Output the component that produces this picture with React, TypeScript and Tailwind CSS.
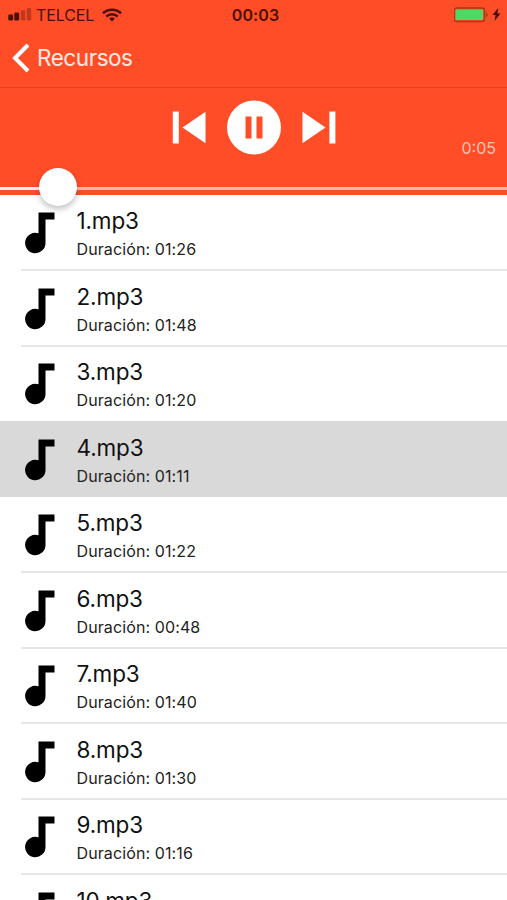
import React from "react";

const tracks = [
  { name: "1.mp3", duration: "01:26" },
  { name: "2.mp3", duration: "01:48" },
  { name: "3.mp3", duration: "01:20" },
  { name: "4.mp3", duration: "01:11" },
  { name: "5.mp3", duration: "01:22" },
  { name: "6.mp3", duration: "00:48" },
  { name: "7.mp3", duration: "01:40" },
  { name: "8.mp3", duration: "01:30" },
  { name: "9.mp3", duration: "01:16" },
  { name: "10.mp3" },
];

const playing = 3;

function StatusBar() {
  return (
    <div className="flex h-7 items-center justify-between pt-px pr-1.5 pl-2 text-[#4a1006]">
      <div className="flex w-[140px] items-center">
        <svg width="24" height="13" viewBox="0 0 24 13" fill="currentColor">
          <rect x="0.3" y="6.5" width="4.8" height="6" rx="1.2" />
          <rect x="6.3" y="4.5" width="4.8" height="8" rx="1.2" />
          <rect x="12.8" y="2.2" width="4.4" height="10.3" rx="1.2" opacity="0.35" />
          <rect x="18.8" y="0" width="4.4" height="12.5" rx="1.2" opacity="0.35" />
        </svg>
        <span className="ml-1 text-[16px] tracking-[-0.1px]">TELCEL</span>
        <svg className="ml-2" width="20" height="14" viewBox="0 0 20 14" fill="none" stroke="currentColor" strokeWidth="2.6">
          <path d="M1 5.2C6 .5 14 .5 19 5.2" />
          <path d="M4.3 8.5c3.3-3 8.1-3 11.4 0" />
          <path d="M10 13.5 7 10.6c1.8-1.5 4.2-1.5 6 0z" fill="currentColor" stroke="none" />
        </svg>
      </div>
      <span className="pl-0.5 text-[16px] font-semibold tracking-[0.1px]">00:03</span>
      <div className="flex w-[140px] items-center justify-end">
        <svg width="36" height="16" viewBox="0 0 36 16">
          <rect x="0.2" y="1" width="30.3" height="13.5" rx="2.5" fill="none" stroke="#a53b12" strokeWidth="1.4" />
          <rect x="1.6" y="2.4" width="27.5" height="10.7" rx="1" fill="#4cd964" />
          <path d="M32 5.6c2 .6 2 4.2 0 4.8z" fill="#a53b12" />
        </svg>
        <svg className="ml-0.5" width="9" height="13" viewBox="0 0 9 13" fill="currentColor">
          <path d="M6.2 0 .5 7h3L2.5 13 8.5 5.6h-3z" />
        </svg>
      </div>
    </div>
  );
}

function Player() {
  return (
    <div className="h-[106.5px]">
      <div className="flex h-[98.5px] items-start">
        <div className="w-[84px]" />
        <div className="flex flex-1 items-center justify-center gap-[21px] pt-3 text-white">
          <svg width="34" height="33" viewBox="0 0 34 33" fill="currentColor">
            <path d="M.8.5h6v32h-6zM33.5.7v31.6L10.5 16.5z" />
          </svg>
          <svg width="54" height="55" viewBox="0 0 54 55">
            <circle cx="27" cy="27.5" r="27" fill="currentColor" />
            <path d="M18.5 16.5h6v22h-6zM29.5 16.5h6v22h-6z" fill="#ff4d28" />
          </svg>
          <svg width="34" height="33" viewBox="0 0 34 33" fill="currentColor">
            <path d="M.5.7v31.6l23-15.8zM27.4.5h6v32h-6z" />
          </svg>
        </div>
        <span className="w-[84px] pt-12 pr-[11px] text-right text-[16px] leading-6 text-[#ffc4b5]">0:05</span>
      </div>
      <div className="relative h-[3px] bg-[#ffb9a8]">
        <div className="h-full w-[58px] bg-[#ffeee9]" />
        <div className="absolute -top-[18.5px] left-[39px] size-[38px] rounded-full bg-white shadow-[0_3px_6px_rgba(0,0,0,0.25)]" />
      </div>
    </div>
  );
}

function MusicNote() {
  return (
    <svg className="mt-[16.5px] ml-1 shrink-0" width="30" height="42" viewBox="0 0 30 42">
      <path d="M13.5.5h16v7h-9V31a10.2 10.2 0 1 1-7-9.7z" fill="#000" />
    </svg>
  );
}

export default function App() {
  return (
    <div className="h-[900px] w-full overflow-hidden bg-white font-['Inter','Liberation_Sans',sans-serif]">
      <header className="bg-[#ff4d28]">
        <StatusBar />
        <div className="flex h-[60px] items-center border-b border-[#e0401f] pl-3 text-white">
          <svg width="18" height="30" viewBox="0 0 18 30" fill="none" stroke="currentColor" strokeWidth="4">
            <path d="M16 2 3 15l13 13" />
          </svg>
          <span className="ml-[7px] text-[22.5px] tracking-[-0.45px] text-[#ffe9e3]">Recursos</span>
        </div>
        <Player />
      </header>
      <ul>
        {tracks.map((track, i) => (
          <li
            key={track.name}
            className={`flex h-[75.5px] pl-[21px] ${i === playing ? "bg-[#d9d9d9]" : ""}`}
          >
            {/* the highlighted row hides the lines above and below it */}
            <div
              className={`-mt-px flex flex-1 items-start border-t-2 ${
                i === 0 || i === playing || i === playing + 1 ? "border-transparent" : "border-[#e6e6e6]"
              }`}
            >
              <MusicNote />
              <div className="ml-[21.5px] pt-[10.5px] text-[#111]">
                <p className="text-[22.5px] leading-[30px] tracking-[-0.15px]">{track.name}</p>
                {track.duration && (
                  <p className="text-[16px] leading-[26px] tracking-[0.11px] text-[#222]">
                    Duración: {track.duration}
                  </p>
                )}
              </div>
            </div>
          </li>
        ))}
      </ul>
    </div>
  );
}
